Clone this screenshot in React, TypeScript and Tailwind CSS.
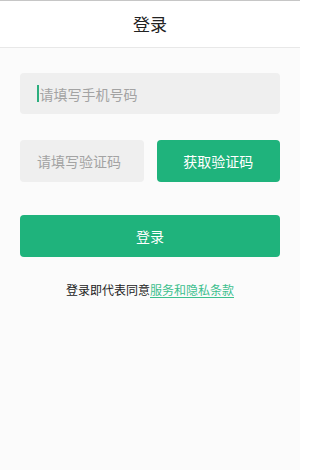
import React from "react";

export default function App() {
  return (
    <div
      className="w-[300px] h-[470px] bg-[#fbfbfb] flex flex-col"
      style={{ fontFamily: '"Noto Sans CJK SC", "Noto Sans", sans-serif' }}
    >
      <div className="h-[48px] bg-white border-t border-t-[#c6c6c6] border-b border-b-[#e8e8e8] flex items-center justify-center">
        <span className="text-[17px] text-[#222]">登录</span>
      </div>
      <div className="px-[20px] pt-[25px] flex flex-col">
        <div className="h-[41px] bg-[#efefef] rounded-[4px] flex items-center pl-[17px]">
          <span className="w-[1.5px] h-[17px] bg-[#2cae7e] mr-[1px]"></span>
          <span className="text-[14px] text-[#a3a3a3] leading-none">请填写手机号码</span>
        </div>
        <div className="mt-[26px] grid grid-cols-2 gap-[13px]">
          <div className="h-[42px] bg-[#efefef] rounded-[4px] flex items-center pl-[17px]">
            <span className="text-[14px] text-[#a3a3a3] leading-none">请填写验证码</span>
          </div>
          <div className="h-[42px] bg-[#1fb37c] rounded-[4px] flex items-center justify-center">
            <span className="text-[14px] text-white leading-none">获取验证码</span>
          </div>
        </div>
        <div className="mt-[33px] h-[42px] bg-[#1fb37c] rounded-[4px] flex items-center justify-center">
          <span className="text-[14px] text-white leading-none">登录</span>
        </div>
        <div className="mt-[27px] flex justify-center text-[12px] leading-none">
          <span className="text-[#222]">登录即代表同意</span>
          <span className="text-[#3bbf8d] underline underline-offset-2">服务和隐私条款</span>
        </div>
      </div>
    </div>
  );
}
